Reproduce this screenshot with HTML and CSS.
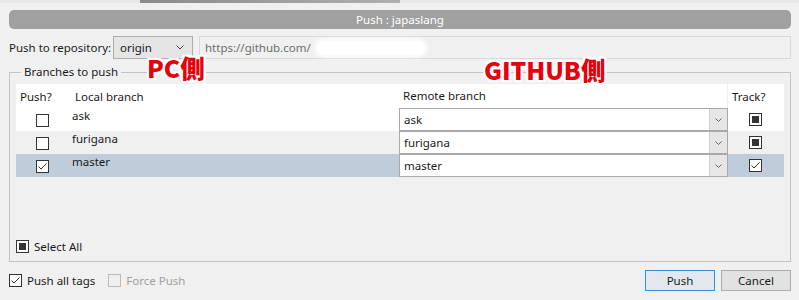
FILE: index.html
```html
<!DOCTYPE html>
<html lang="ja">
  <head>
    <meta charset="UTF-8" />
    <title>Push : japaslang</title>
    <link rel="stylesheet" href="styles.css">
  </head>
  <body>
    <div class="topstrip"></div>
    <div class="dialog">
      <div class="titlebar">Push : japaslang</div>

      <div class="repo-row">
        <span class="label">Push to repository:</span>
        <div class="combo origin">
          <span>origin</span>
          <svg class="chev" width="8" height="5" viewBox="0 0 8 5"><polyline points="0.5,0.5 4,4 7.5,0.5" fill="none" stroke="#444" stroke-width="1"/></svg>
        </div>
        <div class="url">
          <span>https://github.com/</span>
          <span class="blur"></span>
        </div>
      </div>

      <fieldset class="group">
        <legend>Branches to push</legend>
        <div class="table">
          <div class="row head">
            <div class="c-push">Push?</div>
            <div class="c-local">Local branch</div>
            <div class="c-remote">Remote branch</div>
            <div class="c-track">Track?</div>
          </div>
          <div class="row">
            <div class="c-push"><span class="cb"></span></div>
            <div class="c-local">ask</div>
            <div class="c-remote">
              <div class="rcombo"><span>ask</span><span class="btn"><svg width="7" height="4" viewBox="0 0 7 4"><polyline points="0.5,0.5 3.5,3.5 6.5,0.5" fill="none" stroke="#666" stroke-width="1"/></svg></span></div>
            </div>
            <div class="c-track"><span class="cb mixed"></span></div>
          </div>
          <div class="row alt">
            <div class="c-push"><span class="cb"></span></div>
            <div class="c-local">furigana</div>
            <div class="c-remote">
              <div class="rcombo"><span>furigana</span><span class="btn"><svg width="7" height="4" viewBox="0 0 7 4"><polyline points="0.5,0.5 3.5,3.5 6.5,0.5" fill="none" stroke="#666" stroke-width="1"/></svg></span></div>
            </div>
            <div class="c-track"><span class="cb mixed"></span></div>
          </div>
          <div class="row sel">
            <div class="c-push"><span class="cb"><svg width="11" height="11" viewBox="0 0 11 11"><polyline points="1.5,5.5 4,8 9.5,2.5" fill="none" stroke="#333" stroke-width="1"/></svg></span></div>
            <div class="c-local">master</div>
            <div class="c-remote">
              <div class="rcombo"><span>master</span><span class="btn"><svg width="7" height="4" viewBox="0 0 7 4"><polyline points="0.5,0.5 3.5,3.5 6.5,0.5" fill="none" stroke="#666" stroke-width="1"/></svg></span></div>
            </div>
            <div class="c-track"><span class="cb"><svg width="11" height="11" viewBox="0 0 11 11"><polyline points="1.5,5.5 4,8 9.5,2.5" fill="none" stroke="#333" stroke-width="1"/></svg></span></div>
          </div>
        </div>
        <label class="check select-all"><span class="cb mixed"></span>Select All</label>
      </fieldset>

      <div class="footer">
        <label class="check"><span class="cb"><svg width="11" height="11" viewBox="0 0 11 11"><polyline points="1.5,5.5 4,8 9.5,2.5" fill="none" stroke="#333" stroke-width="1"/></svg></span>Push all tags</label>
        <label class="check disabled"><span class="cb"></span>Force Push</label>
        <div class="buttons">
          <button class="primary">Push</button>
          <button>Cancel</button>
        </div>
      </div>

      <div class="note note-pc">PC側</div>
      <div class="note note-gh">GITHUB側</div>
    </div>
  </body>
</html>
```

FILE: styles.css
```css
body {
  margin: 0;
  background-color: #f0f0f0;
  font-family: "Noto Sans", "Noto Sans CJK JP", sans-serif;
  font-size: 11.5px;
  color: #1a1a1a;
  width: 799px;
  height: 300px;
  overflow: hidden;
}
.topstrip {
  height: 3px;
  background: linear-gradient(to right, #e8e8e8 140px, #8a8a8a 140px, #b0b0b0 400px, #e8e8e8 400px);
}
.dialog {
  position: relative;
  padding: 0 8px 0 9px;
}
.titlebar {
  margin-top: 7px;
  height: 19px;
  line-height: 19px;
  background-color: #a0a0a0;
  border-radius: 5px;
  color: white;
  text-align: center;
}

/* repository row */
.repo-row {
  display: flex;
  align-items: center;
  margin-top: 7px;
  height: 23px;
}
.repo-row .label {
  width: 104px;
  white-space: nowrap;
}
.combo {
  display: flex;
  align-items: center;
  justify-content: space-between;
  box-sizing: border-box;
  height: 23px;
  border: 1px solid #adadad;
  background-color: #e5e5e5;
  padding: 0 8px 0 6px;
}
.origin {
  width: 80px;
}
.url {
  flex: 1;
  display: flex;
  align-items: center;
  box-sizing: border-box;
  height: 23px;
  margin-left: 6px;
  border: 1px solid #d9d9d9;
  padding-left: 5px;
  color: #6d6d6d;
}
.url .blur {
  width: 108px;
  height: 14px;
  margin-left: 6px;
  background-color: #fff;
  border-radius: 7px;
  box-shadow: 0 0 4px 2px #fff;
}

/* group box */
.group {
  margin: 5px 0 0;
  padding: 4px 6px 7px;
  border: 1px solid #c4c4c4;
}
.group legend {
  padding: 0 3px;
  margin-left: 5px;
  line-height: 16px;
}
.row {
  display: flex;
  height: 23px;
  align-items: stretch;
  background-color: #fff;
}
.row.head {
  height: 24px;
  align-items: center;
}
.row.alt {
  background-color: #f0f0f0;
}
.row.sel {
  background-color: #bfcddb;
}
.c-push {
  width: 59px;
  padding-left: 4px;
  box-sizing: border-box;
}
.row:not(.head) .c-push {
  display: flex;
  justify-content: center;
  align-items: flex-end;
  padding: 0 6px 4px 0;
}
.c-local {
  width: 324px;
}
.row:not(.head) .c-local {
  line-height: 16px;
  margin-left: -3px;
  width: 327px;
}
.c-remote {
  width: 329px;
  padding-left: 4px;
  box-sizing: border-box;
}
.row.head .c-remote {
  height: 24px;
  line-height: 23px;
  border-right: 1px solid #f0f0f0;
}
.row:not(.head) .c-remote {
  padding: 0;
  background-color: #f0f0f0;
}
.c-track {
  flex: 1;
  padding-left: 4px;
}
.row:not(.head) .c-track {
  display: flex;
  justify-content: center;
  align-items: center;
  padding: 0 2px 0 0;
}
.rcombo {
  display: flex;
  height: 23px;
  box-sizing: border-box;
  border: 1px solid #a9a9a9;
  background-color: #fff;
  align-items: center;
}
.rcombo span:first-child {
  flex: 1;
  padding-left: 4px;
}
.rcombo .btn {
  width: 17px;
  height: 100%;
  display: flex;
  align-items: center;
  justify-content: center;
  background-color: #e6e6e6;
  border-left: 1px solid #cfcfcf;
}

/* checkboxes */
.cb {
  display: inline-flex;
  align-items: center;
  justify-content: center;
  flex: none;
  width: 13px;
  height: 13px;
  box-sizing: border-box;
  border: 1px solid #333;
  background-color: #fff;
}
.cb.mixed::after {
  content: "";
  width: 7px;
  height: 7px;
  background-color: #333;
}
.check {
  display: flex;
  align-items: center;
  gap: 5px;
  height: 16px;
}
.select-all {
  margin-top: 61px;
}
.check.disabled {
  color: #a0a0a0;
}
.check.disabled .cb {
  border-color: #bcbcbc;
  background-color: #f0f0f0;
}

/* footer */
.footer {
  display: flex;
  align-items: center;
  margin-top: 8px;
  gap: 13px;
  height: 21px;
}
.buttons {
  margin-left: auto;
  display: flex;
  gap: 6px;
}
.buttons button {
  width: 70px;
  height: 21px;
  font: inherit;
  color: #1a1a1a;
  background-color: #e1e1e1;
  border: 1px solid #adadad;
  padding: 0;
}
.buttons .primary {
  border-color: #3c8fd6;
  background-color: #e3e8ee;
}

/* red annotations over the screenshot */
.note {
  position: absolute;
  font-family: "Noto Sans CJK JP", sans-serif;
  font-weight: 900;
  font-size: 24.5px;
  line-height: 1;
  color: #e8000b;
  text-shadow: 2px 0 #fff, -2px 0 #fff, 0 2px #fff, 0 -2px #fff, 2px 2px #fff, -2px -2px #fff, 2px -2px #fff, -2px 2px #fff;
}
.note-pc {
  left: 147px;
  top: 46px;
}
.note-gh {
  left: 484px;
  top: 48px;
}
```
